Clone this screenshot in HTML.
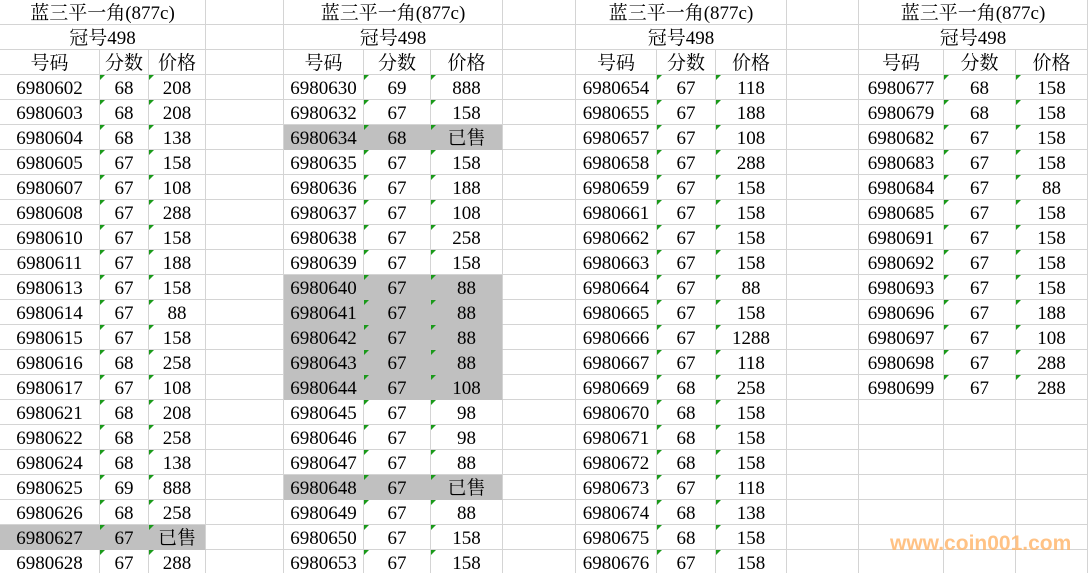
<!DOCTYPE html>
<html><head><meta charset="utf-8"><style>
html,body{margin:0;padding:0;background:#fff;width:1089px;height:573px;overflow:hidden;position:relative}
table{border-collapse:separate;border-spacing:0;table-layout:fixed;width:1088px;font-family:"Liberation Serif","Noto Serif CJK SC",serif;font-size:19px;color:#000}
tr{height:25px}
td{height:21px;padding:3px 0 0 0;border-right:1px solid #d4d4d4;border-bottom:1px solid #d4d4d4;text-align:center;white-space:nowrap;overflow:hidden;position:relative;line-height:21px}
td.t::before{content:"";position:absolute;left:0;top:0;border-top:5px solid #1a9a1a;border-right:5px solid transparent}
.g{background:#c0c0c0;border-bottom-color:#c0c0c0}
.gi{border-right-color:#c0c0c0}
.wm{position:absolute;left:890px;top:532px;font:bold 21px "Liberation Sans",sans-serif;color:#ffb870;opacity:.85}
</style></head><body>
<table>
<colgroup><col style="width:100px"><col style="width:49px"><col style="width:57px"><col style="width:78px"><col style="width:80px"><col style="width:67px"><col style="width:72px"><col style="width:73px"><col style="width:81px"><col style="width:59px"><col style="width:71px"><col style="width:72px"><col style="width:85px"><col style="width:72px"><col style="width:72px"></colgroup>
<tr><td colspan="3">蓝三平一角(877c)</td><td></td><td colspan="3">蓝三平一角(877c)</td><td></td><td colspan="3">蓝三平一角(877c)</td><td></td><td colspan="3">蓝三平一角(877c)</td></tr>
<tr><td colspan="3">冠号498</td><td></td><td colspan="3">冠号498</td><td></td><td colspan="3">冠号498</td><td></td><td colspan="3">冠号498</td></tr>
<tr><td>号码</td><td>分数</td><td>价格</td><td></td><td>号码</td><td>分数</td><td>价格</td><td></td><td>号码</td><td>分数</td><td>价格</td><td></td><td>号码</td><td>分数</td><td>价格</td></tr>
<tbody id="b"></tbody>
</table>
<div class="wm">www.coin001.com</div>
<script>
var B=[
[["0602",68,208],["0603",68,208],["0604",68,138],["0605",67,158],["0607",67,108],["0608",67,288],["0610",67,158],["0611",67,188],["0613",67,158],["0614",67,88],["0615",67,158],["0616",68,258],["0617",67,108],["0621",68,208],["0622",68,258],["0624",68,138],["0625",69,888],["0626",68,258],["0627",67,"已售",1],["0628",67,288]],
[["0630",69,888],["0632",67,158],["0634",68,"已售",1],["0635",67,158],["0636",67,188],["0637",67,108],["0638",67,258],["0639",67,158],["0640",67,88,1],["0641",67,88,1],["0642",67,88,1],["0643",67,88,1],["0644",67,108,1],["0645",67,98],["0646",67,98],["0647",67,88],["0648",67,"已售",1],["0649",67,88],["0650",67,158],["0653",67,158]],
[["0654",67,118],["0655",67,188],["0657",67,108],["0658",67,288],["0659",67,158],["0661",67,158],["0662",67,158],["0663",67,158],["0664",67,88],["0665",67,158],["0666",67,1288],["0667",67,118],["0669",68,258],["0670",68,158],["0671",68,158],["0672",68,158],["0673",67,118],["0674",68,138],["0675",68,158],["0676",67,158]],
[["0677",68,158],["0679",68,158],["0682",67,158],["0683",67,158],["0684",67,88],["0685",67,158],["0691",67,158],["0692",67,158],["0693",67,158],["0696",67,188],["0697",67,108],["0698",67,288],["0699",67,288]]];
var h="";
for(var r=0;r<20;r++){h+="<tr>";for(var b=0;b<4;b++){var d=B[b][r];if(d){var g=d[3]?' g':'';var gi=d[3]?' gi':'';h+='<td class="'+g+gi+'">698'+d[0]+'</td><td class="t'+g+gi+'">'+d[1]+'</td><td class="t'+g+'">'+d[2]+'</td>';}else h+='<td></td><td></td><td></td>';if(b<3)h+='<td></td>';}h+="</tr>";}
document.getElementById("b").innerHTML=h;
</script>
</body></html>
